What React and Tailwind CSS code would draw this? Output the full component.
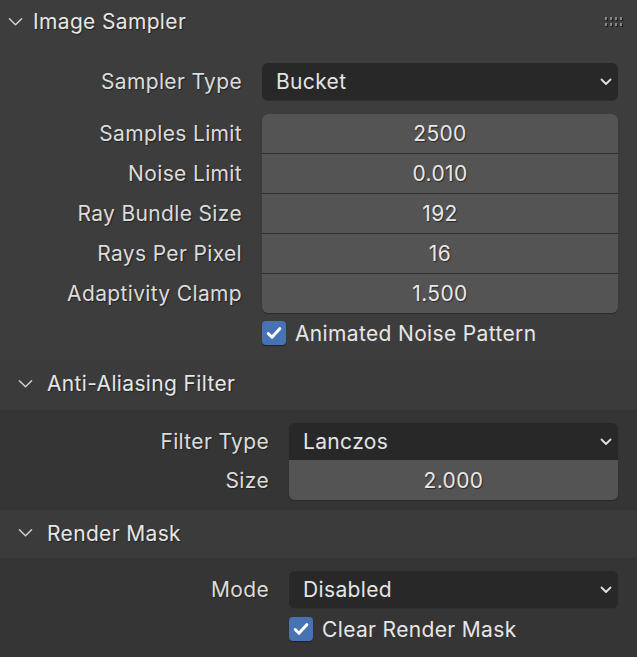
import React from "react";

const Chevron = ({ className = "" }) => (
  <svg className={className} viewBox="0 0 16 10" fill="none">
    <path d="M1.5 1.5 L8 8 L14.5 1.5" stroke="#d0d0d0" strokeWidth="1.6" strokeLinecap="round" strokeLinejoin="round" />
  </svg>
);

const SmallChevron = () => (
  <svg className="w-[12px] h-[8px]" viewBox="0 0 12 8" fill="none">
    <path d="M1.5 1.5 L6 6 L10.5 1.5" stroke="#e0e0e0" strokeWidth="1.8" strokeLinecap="round" strokeLinejoin="round" />
  </svg>
);

const Grip = () => (
  <div className="grid grid-cols-4 gap-x-[3px] gap-y-[3px]">
    {Array.from({ length: 8 }).map((_, i) => (
      <div key={i} className="w-[2px] h-[3px] bg-[#8a8a8a] shadow-[1px_1px_0_#1a1a1a]" />
    ))}
  </div>
);

const Dropdown = ({ value }) => (
  <div className="h-[37px] flex items-center justify-between pl-[14px] pr-[6px] bg-[#282828] rounded-[6px] text-[#e4e4e4] shadow-[0_1px_0_#303030]">
    <span>{value}</span>
    <SmallChevron />
  </div>
);

const Check = ({ label }) => (
  <div className="flex items-center gap-[9px] h-[24px]">
    <div className="w-[24px] h-[24px] rounded-[4px] bg-[#4772b3] flex items-center justify-center shadow-[0_1px_1px_#222]">
      <svg className="w-[16px] h-[14px]" viewBox="0 0 16 14" fill="none">
        <path d="M2.2 7.5 L6 11.3 L13.8 2.7" stroke="#ffffff" strokeWidth="3" strokeLinecap="round" strokeLinejoin="round" />
      </svg>
    </div>
    <span className="text-[#e6e6e6]">{label}</span>
  </div>
);

const Label = ({ children }) => (
  <span className="text-[#dcdcdc] [text-shadow:1px_1px_1px_#222]">{children}</span>
);

export default function App() {
  const nums = [
    ["Samples Limit", "2500"],
    ["Noise Limit", "0.010"],
    ["Ray Bundle Size", "192"],
    ["Rays Per Pixel", "16"],
    ["Adaptivity Clamp", "1.500"],
  ];
  return (
    <div className="w-[637px] h-[657px] overflow-hidden bg-[#3d3d3d] text-[21px] tracking-[0.35px] leading-none font-['Inter','Noto_Sans',sans-serif] text-[#dcdcdc]">
      {/* Main header */}
      <div className="h-[43px] flex items-center pl-[8px] pr-[15px]">
        <Chevron className="w-[15px] h-[10px]" />
        <span className="ml-[10px] text-[#e6e6e6] [text-shadow:1px_1px_1px_#222]">Image Sampler</span>
        <div className="ml-auto"><Grip /></div>
      </div>

      <div className="pt-[20px] pr-[19px]">
        <div className="grid grid-cols-[242px_1fr] gap-x-[20px] items-center">
          <div className="text-right"><Label>Sampler Type</Label></div>
          <Dropdown value="Bucket" />
        </div>

        <div className="mt-[14px] grid grid-cols-[242px_1fr] gap-x-[20px]">
          <div className="flex flex-col gap-[1px]">
            {nums.map(([l]) => (
              <div key={l} className="h-[39px] flex items-center justify-end"><Label>{l}</Label></div>
            ))}
          </div>
          <div className="flex flex-col gap-[1px] rounded-[6px] overflow-hidden bg-[#2e2e2e] shadow-[0_1px_1px_#2a2a2a]">
            {nums.map(([l, v]) => (
              <div key={l} className="h-[39px] flex items-center justify-center bg-[#545454] text-[#e8e8e8] [text-shadow:1px_1px_1px_#2a2a2a]">{v}</div>
            ))}
          </div>
        </div>

        <div className="mt-[8px] pl-[262px]">
          <Check label="Animated Noise Pattern" />
        </div>
      </div>

      {/* Anti-Aliasing */}
      <div className="mt-[15px] h-[50px] flex items-center pl-[18px] pb-[3px] bg-[#3b3b3b]">
        <Chevron className="w-[15px] h-[10px]" />
        <span className="ml-[14px] text-[#e6e6e6] [text-shadow:1px_1px_1px_#222]">Anti-Aliasing Filter</span>
      </div>
      <div className="bg-[#353535] pt-[13px] pb-[10px] pr-[19px]">
        <div className="grid grid-cols-[269px_1fr] gap-x-[20px]">
          <div className="flex flex-col">
            <div className="h-[37px] flex items-center justify-end"><Label>Filter Type</Label></div>
            <div className="h-[40px] flex items-center justify-end"><Label>Size</Label></div>
          </div>
          <div className="flex flex-col rounded-[6px] overflow-hidden shadow-[0_1px_1px_#2a2a2a]">
            <div className="h-[37px] flex items-center justify-between pl-[14px] pr-[6px] bg-[#282828] text-[#e4e4e4]">
              <span>Lanczos</span>
              <SmallChevron />
            </div>
            <div className="h-[40px] flex items-center justify-center bg-[#545454] text-[#e8e8e8] [text-shadow:1px_1px_1px_#2a2a2a]">2.000</div>
          </div>
        </div>
      </div>

      {/* Render Mask */}
      <div className="h-[48px] flex items-center pl-[18px] pb-[2px] bg-[#3b3b3b]">
        <Chevron className="w-[15px] h-[10px]" />
        <span className="ml-[14px] text-[#e6e6e6] [text-shadow:1px_1px_1px_#222]">Render Mask</span>
      </div>
      <div className="bg-[#353535] h-[200px] pt-[13px] pr-[19px]">
        <div className="grid grid-cols-[269px_1fr] gap-x-[20px] items-center">
          <div className="text-right"><Label>Mode</Label></div>
          <Dropdown value="Disabled" />
        </div>
        <div className="mt-[9px] pl-[289px]">
          <Check label="Clear Render Mask" />
        </div>
      </div>
    </div>
  );
}
